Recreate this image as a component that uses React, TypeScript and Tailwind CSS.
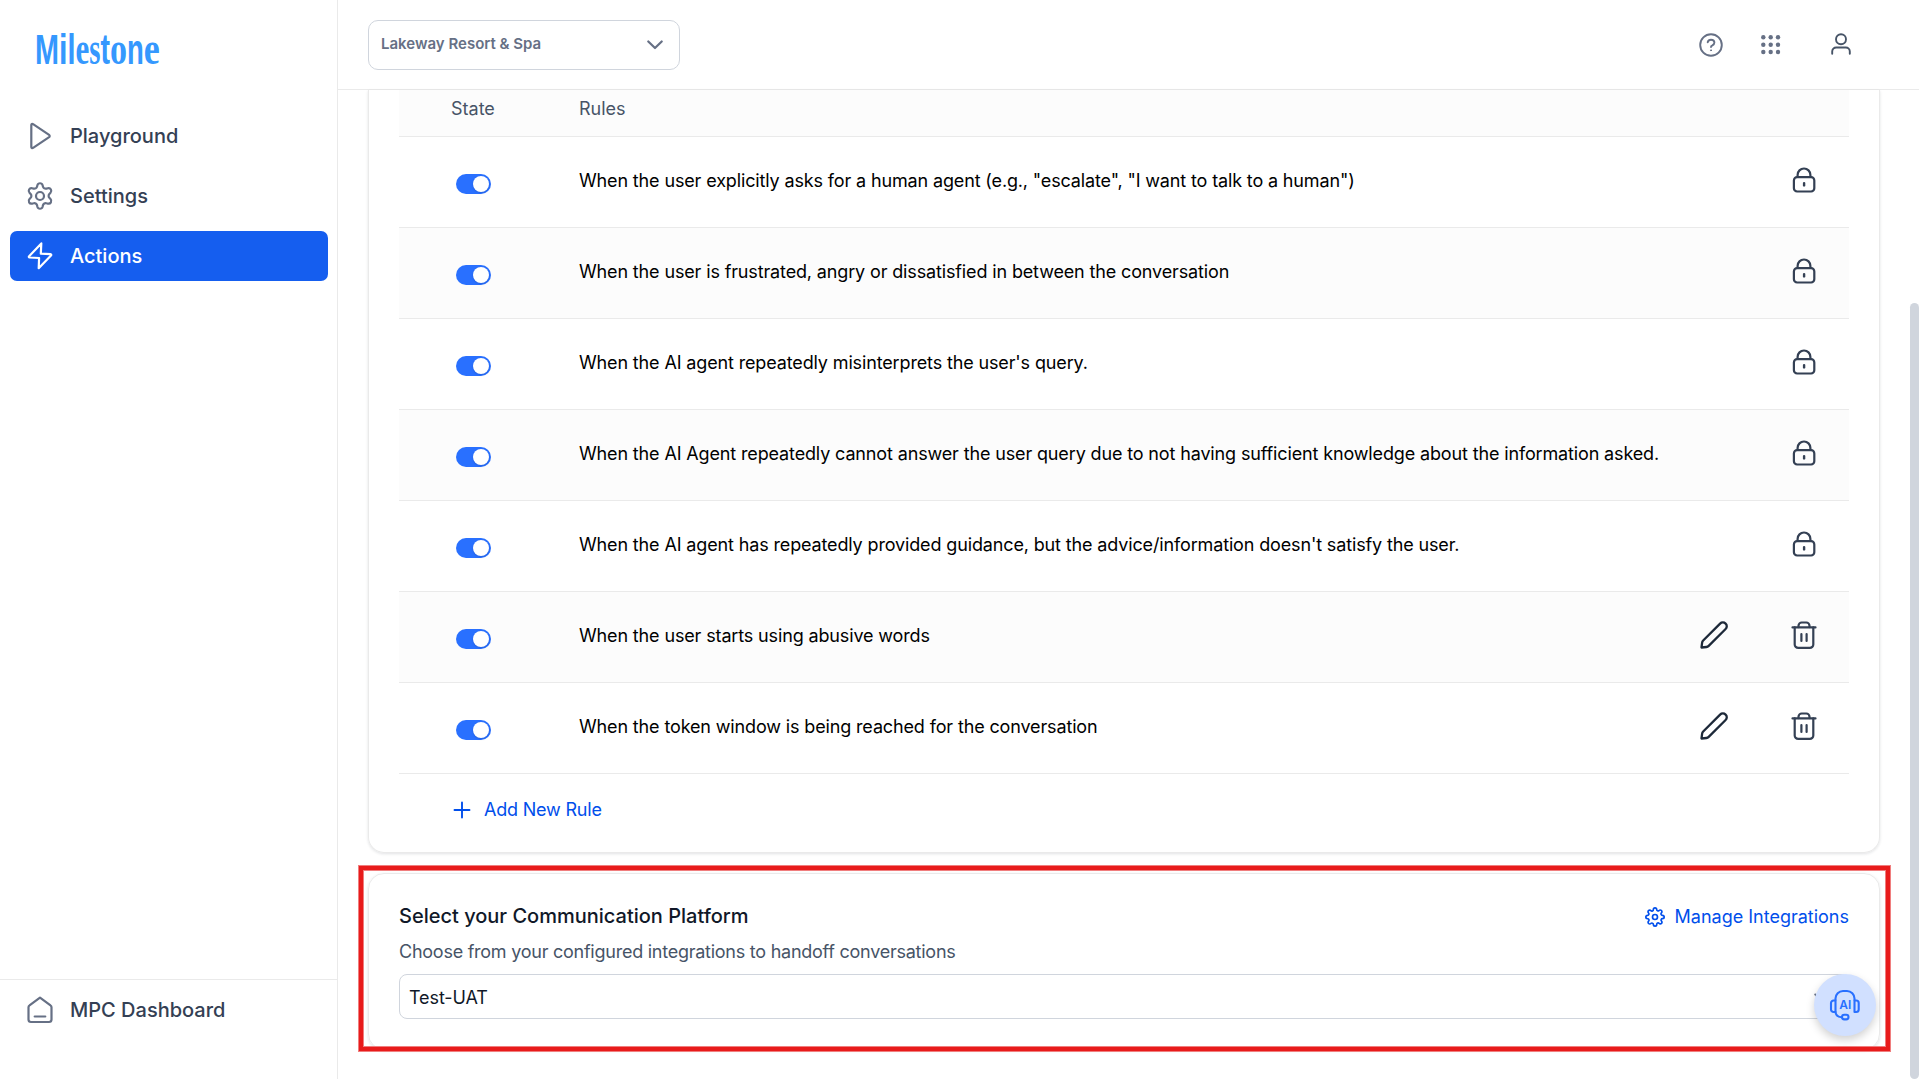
import type { ReactNode } from "react";
import { FiSettings } from "react-icons/fi";

const iconBase = {
  fill: "none",
  stroke: "currentColor",
  strokeLinecap: "round" as const,
  strokeLinejoin: "round" as const,
};

const serif = { fontFamily: "Liberation Serif, serif", fontSize: 47 };
const sans = { fontFamily: "Liberation Sans, sans-serif", fontSize: 43 };

// x offset and advance of every letter in the wordmark
const logoLetters = [
  { char: "M", x: 0, width: 24, font: sans },
  { char: "i", x: 24, width: 8.5, font: sans },
  { char: "l", x: 32.5, width: 8, font: sans },
  { char: "e", x: 40.5, width: 13.8, font: serif },
  { char: "s", x: 54.3, width: 11.2, font: serif },
  { char: "t", x: 65.5, width: 9.5, font: sans },
  { char: "o", x: 75, width: 17, font: serif },
  { char: "n", x: 92, width: 16.8, font: sans },
  { char: "e", x: 108.8, width: 16, font: serif },
];

function Logo() {
  return (
    <svg width="130" height="60" viewBox="0 0 130 60" className="text-[#3598fe]">
      <text y="44" fill="currentColor" fontWeight="700">
        {logoLetters.map(({ char, x, width, font }) => (
          <tspan key={x} x={x} textLength={width} lengthAdjust="spacingAndGlyphs" {...font}>
            {char}
          </tspan>
        ))}
      </text>
    </svg>
  );
}

function PlayIcon() {
  return (
    <svg width="30" height="30" viewBox="0 0 30 30" strokeWidth="2.2" {...iconBase}>
      <path d="M6.3 4.100v21.800c0 1 .9 1.400 1.800.9l16-10.600c.8-.6.8-1.800 0-2.400L8.100 3.200C7.200 2.700 6.300 3.100 6.300 4.100z" />
    </svg>
  );
}

function GearIcon() {
  return (
    <svg width="30" height="30" viewBox="0 0 30 30" strokeWidth="2.2" {...iconBase}>
      <circle cx="15" cy="15" r="4" />
      <path d="M12.400 4.200a2.700 2.700 0 0 1 5.200 0l.4 1.500a2.700 2.700 0 0 0 3.400 1.900l1.500-.4a2.700 2.700 0 0 1 2.600 4.500l-1 1.200a2.700 2.700 0 0 0 0 4l1 1.200a2.700 2.700 0 0 1-2.600 4.500l-1.500-.4a2.700 2.700 0 0 0-3.400 1.900l-.4 1.700a2.700 2.700 0 0 1-5.200 0l-.4-1.700a2.700 2.700 0 0 0-3.400-1.900l-1.500.4a2.700 2.700 0 0 1-2.600-4.500l1-1.200a2.700 2.700 0 0 0 0-4l-1-1.200a2.700 2.700 0 0 1 2.600-4.500l1.500.4a2.700 2.700 0 0 0 3.400-1.900z" />
    </svg>
  );
}

function BoltIcon() {
  return (
    <svg width="30" height="30" viewBox="0 0 30 30" strokeWidth="2.2" {...iconBase}>
      <path d="M16.300 2.400 4.100 15.200c-.5.500-.2 1.200.5 1.300l9.500.5-.4 10.200 12.300-12.700c.5-.5.200-1.200-.5-1.300l-9.700-.6z" />
    </svg>
  );
}

function HomeIcon() {
  return (
    <svg width="30" height="30" viewBox="0 0 30 30" strokeWidth="2.2" {...iconBase}>
      <path d="M3.500 12.300c0-.8.400-1.500 1-1.900L15 2.700l10.500 7.700c.6.400 1 1.100 1 1.900v12.200a2.500 2.500 0 0 1-2.500 2.500H6a2.500 2.500 0 0 1-2.500-2.500z" />
      <path d="M9.700 21.500h10.600" />
    </svg>
  );
}

function HelpIcon() {
  return (
    <svg width="24" height="24" viewBox="0 0 24 24" strokeWidth="1.900" {...iconBase}>
      <circle cx="12" cy="12" r="10.800" />
      <path d="M8.700 9.300A3.400 3.400 0 0 1 12 6.700c1.900 0 3.400 1.200 3.400 2.900 0 1.500-1 2.200-2 2.700-.9.400-1.400.8-1.400 1.700" />
      <circle cx="12" cy="17.300" r=".5" fill="currentColor" strokeWidth="1" />
    </svg>
  );
}

function GridIcon() {
  const steps = [2.3, 9.7, 17];
  return (
    <svg width="20" height="20" viewBox="0 0 20 20" fill="currentColor">
      {steps.map((cy) => steps.map((cx) => <circle key={`${cx}-${cy}`} cx={cx} cy={cy} r="2.200" />))}
    </svg>
  );
}

function UserIcon() {
  return (
    <svg width="20" height="22" viewBox="0 0 20 22" strokeWidth="1.900" {...iconBase}>
      <circle cx="10" cy="6.200" r="5" />
      <path d="M1.200 20.700v-2.200a4 4 0 0 1 4-4h9.600a4 4 0 0 1 4 4v2.200" />
    </svg>
  );
}

function LockIcon() {
  return (
    <svg width="24" height="26" viewBox="0 0 24 26" strokeWidth="2.200" {...iconBase}>
      <rect x="1.900" y="10.200" width="20.400" height="14.300" rx="3.200" />
      <path d="M5.600 9.900V7.900a6.400 6.400 0 0 1 12.800 0v2" />
      <path d="M12.100 16.100v2.300" strokeWidth="2.400" />
    </svg>
  );
}

function PencilIcon() {
  return (
    <svg width="28" height="28" viewBox="0 0 28 28" strokeWidth="2.300" {...iconBase}>
      <path d="M1.500 26.500l.6-4.700c.1-.9.500-1.700 1.100-2.300L20.100 2.600a4 4 0 0 1 5.500 0 3.700 3.700 0 0 1 0 5.400L8.700 24.900c-.6.600-1.400 1-2.300 1.100z" />
    </svg>
  );
}

function TrashIcon() {
  return (
    <svg width="26" height="28" viewBox="0 0 26 28" strokeWidth="2.200" {...iconBase}>
      <path d="M1.500 6.400h23" />
      <path d="M3.700 6.400v17a3.500 3.500 0 0 0 3.500 3.500h11.600a3.500 3.500 0 0 0 3.500-3.500v-17" />
      <path d="M7.500 6.100V4.700a3.200 3.200 0 0 1 3.200-3.200h4.600a3.200 3.200 0 0 1 3.200 3.200v1.400M10.400 13v7M15.600 13v7" />
    </svg>
  );
}

function HeadsetIcon() {
  return (
    <svg width="32" height="32" viewBox="0 0 32 32" strokeWidth="2.100" {...iconBase}>
      <path d="M6.500 11V9.500a7.500 7.500 0 0 1 7.500-7.500h4a7.500 7.500 0 0 1 7.500 7.500V11" />
      <path d="M6.500 11.500H4.600A2.500 2.500 0 0 0 2 14v6.500A2.500 2.500 0 0 0 4.600 23h1.900zM25.500 11.500h1.700a2.500 2.500 0 0 1 2.500 2.500v6.500a2.500 2.500 0 0 1-2.500 2.500h-1.700z" />
      <path d="M6.500 23c.3 3.200 2.600 5 6.200 5.200" />
      <rect x="13" y="25.800" width="6.500" height="4.600" rx="2.300" />
      <text x="16.300" y="20.400" textAnchor="middle" fill="currentColor" stroke="none" fontFamily="Inter, sans-serif" fontSize="12" fontWeight="600">
        AI
      </text>
    </svg>
  );
}

const navItems = [
  { label: "Playground", icon: <PlayIcon />, active: false },
  { label: "Settings", icon: <GearIcon />, active: false },
  { label: "Actions", icon: <BoltIcon />, active: true },
];

const rules = [
  { text: 'When the user explicitly asks for a human agent (e.g., "escalate", "I want to talk to a human")', locked: true },
  { text: "When the user is frustrated, angry or dissatisfied in between the conversation", locked: true },
  { text: "When the AI agent repeatedly misinterprets the user's query.", locked: true },
  {
    text: "When the AI Agent repeatedly cannot answer the user query due to not having sufficient knowledge about the information asked.",
    locked: true,
  },
  {
    text: "When the AI agent has repeatedly provided guidance, but the advice/information doesn't satisfy the user.",
    locked: true,
  },
  { text: "When the user starts using abusive words", locked: false },
  { text: "When the token window is being reached for the conversation", locked: false },
];

function NavItem({ label, icon, active }: { label: string; icon: ReactNode; active: boolean }) {
  return (
    <a
      className={
        active
          ? "flex h-[50px] items-center gap-[15px] rounded-[7px] bg-[#155eef] pl-[15px] text-white"
          : "flex h-[50px] items-center gap-[15px] rounded-[7px] pl-[15px] text-[#667085]"
      }
    >
      {icon}
      <span className={active ? "text-xl font-medium text-white" : "text-xl font-medium text-[#344054]"}>{label}</span>
    </a>
  );
}

function Sidebar() {
  return (
    <aside className="flex w-[338px] shrink-0 flex-col border-r border-[#eaeaea]">
      <div className="h-[111px] pt-[20px] pl-[35px]">
        <Logo />
      </div>
      <nav className="flex flex-1 flex-col gap-[10px] pr-[9px] pl-[10px]">
        {navItems.map((item) => (
          <NavItem key={item.label} {...item} />
        ))}
      </nav>
      <div className="h-[100px] border-t border-[#eaeaea] pt-[5px] pl-[10px]">
        <NavItem label="MPC Dashboard" icon={<HomeIcon />} active={false} />
      </div>
    </aside>
  );
}

function TopBar() {
  return (
    <header className="flex h-[90px] shrink-0 items-center justify-between border-b border-[#eaeaea] pr-[68px] pl-[30px]">
      <button className="flex h-[50px] w-[312px] items-center justify-between rounded-[10px] border border-[#d0d5dd] pr-[16px] pl-3">
        <span className="text-[15px] font-semibold text-[#667085]">Lakeway Resort &amp; Spa</span>
        <svg width="16" height="10" viewBox="0 0 16 10" strokeWidth="2.2" {...iconBase} className="text-[#667085]">
          <path d="M1.300 1.500 8 8l6.700-6.500" />
        </svg>
      </button>
      <div className="flex items-center text-[#667085]">
        <HelpIcon />
        <span className="ml-[38px]">
          <GridIcon />
        </span>
        <span className="ml-[50px] pb-px text-[#475467]">
          <UserIcon />
        </span>
      </div>
    </header>
  );
}

function Toggle() {
  return (
    <span className="flex h-5 w-[35px] items-center justify-end rounded-full bg-[#2970ff] pr-[2px]">
      <span className="h-4 w-4 rounded-full bg-white shadow-sm" />
    </span>
  );
}

function RuleRow({ text, locked }: { text: string; locked: boolean }) {
  return (
    <li className="flex h-[91px] items-center border-b border-[#eaeaea] pr-8 even:bg-[#fcfcfc]">
      <div className="w-[180px] pt-[4px] pl-[57px]">
        <Toggle />
      </div>
      <p className="flex-1 pb-[2px] text-lg tracking-[-0.14px] text-black">{text}</p>
      <div className="flex items-center text-[#344054]">
        {locked ? (
          <span className="mr-[1px] pb-[4px]">
            <LockIcon />
          </span>
        ) : (
          <div className="flex items-center gap-[63px] pb-[4px]">
            <span className="text-[#1d2939]">
              <PencilIcon />
            </span>
            <TrashIcon />
          </div>
        )}
      </div>
    </li>
  );
}

function RulesCard() {
  return (
    <section className="h-[763px] rounded-b-[16px] border border-t-0 border-[#eaeaea] px-[30px] shadow-[0_1px_3px_rgba(16,24,40,0.12)]">
      <div className="flex h-[47px] border-b border-[#eaeaea] bg-[#fcfcfc] pt-[5px] text-lg text-[#475467]">
        <span className="w-[180px] pl-[52px]">State</span>
        <span>Rules</span>
      </div>
      <ul>
        {rules.map((rule) => (
          <RuleRow key={rule.text} {...rule} />
        ))}
      </ul>
      <button className="flex h-[72px] items-center gap-[13px] pl-[54px] text-lg tracking-[-0.2px] text-[#004eeb]">
        <svg width="18" height="18" viewBox="0 0 18 18" strokeWidth="1.900" {...iconBase}>
          <path d="M9 1.500v15M1.500 9h15" />
        </svg>
        Add New Rule
      </button>
    </section>
  );
}

function PlatformCard() {
  return (
    <section className="mt-[20px] h-[177px] rounded-[16px] border border-[#eaeaea] px-[30px] pt-[28px] shadow-[0_1px_3px_rgba(16,24,40,0.12)]">
      <div className="flex h-[29px] items-start justify-between">
        <h2 className="text-xl font-medium text-[#101828]">Select your Communication Platform</h2>
        <a className="flex items-center gap-[10px] pt-[1px] text-lg text-[#004eeb]">
          <FiSettings size={20} className="-mt-px" />
          Manage Integrations
        </a>
      </div>
      <p className="mt-[7px] text-lg tracking-[-0.25px] text-[#475467]">
        Choose from your configured integrations to handoff conversations
      </p>
      <div className="mt-[8px] flex h-[45px] items-center justify-between rounded-lg border border-[#d0d5dd] px-[9px] pt-[2px] text-lg tracking-[-0.1px] text-[#101828]">
        Test-UAT
        <svg width="16" height="10" viewBox="0 0 16 10" strokeWidth="2" {...iconBase} className="mr-[9px] text-[#667085]">
          <path d="M1.300 1.500 8 8l6.700-6.500" />
        </svg>
      </div>
    </section>
  );
}

export default function App() {
  return (
    <div className="relative flex h-[1079px] w-[1919px] overflow-hidden bg-white font-[Inter,sans-serif]">
      <Sidebar />
      <div className="flex min-w-0 flex-1 flex-col">
        <TopBar />
        <div className="flex flex-1">
          <main className="flex-1 pr-[30px] pl-[30px]">
            <RulesCard />
            <PlatformCard />
          </main>
          <div className="mt-[213px] h-[776px] w-[9px] rounded-full bg-[#d0d5dd]" />
        </div>
      </div>

      {/* Highlight frame */}
      <div className="pointer-events-none absolute top-[866px] left-[359px] h-[185px] w-[1531px] border-4 border-[#e81b1b] shadow-[0_0_0_1px_#f07e7e,inset_0_0_0_1px_#f07e7e]" />

      {/* Chat launcher */}
      <button className="absolute top-[974px] left-[1814px] flex h-[62px] w-[62px] items-center justify-center rounded-full bg-[#d1e0ff] text-[#2970ff] shadow-[0_4px_8px_rgba(0,0,0,0.18)]">
        <HeadsetIcon />
      </button>
    </div>
  );
}
